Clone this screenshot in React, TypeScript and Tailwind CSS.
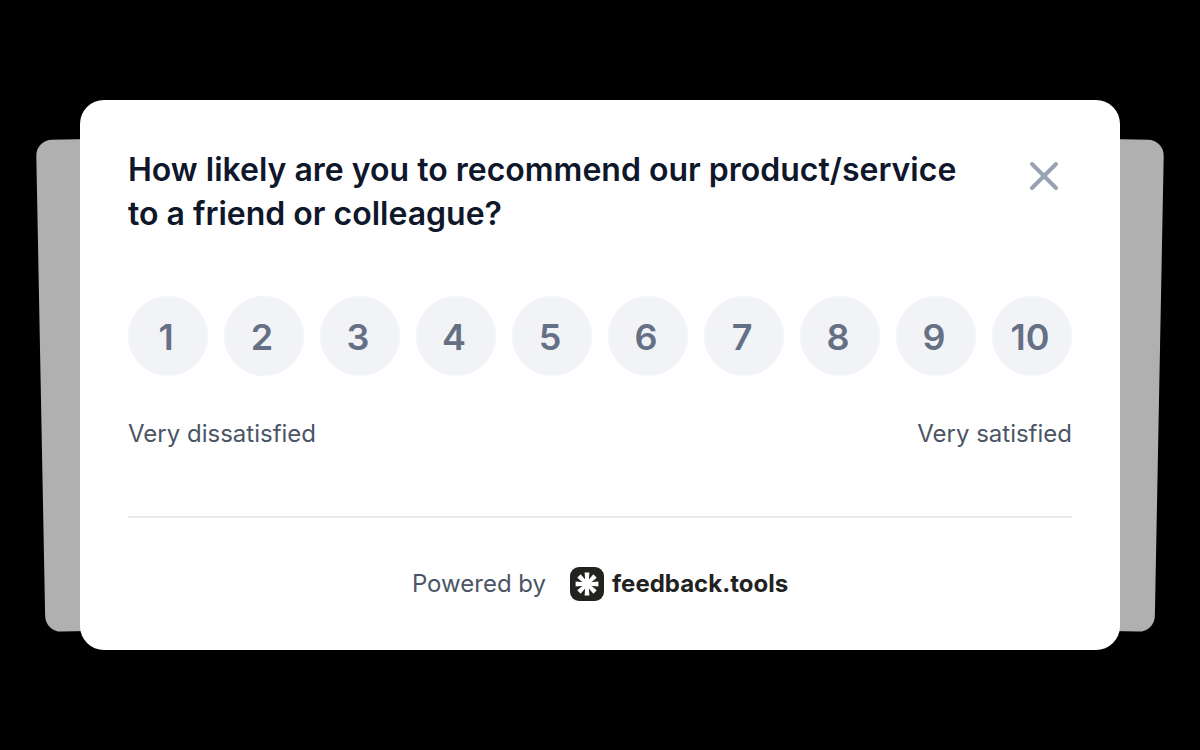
import { useState } from 'react'
import { X } from 'lucide-react'
import clsx from 'clsx'

const scores = [1, 2, 3, 4, 5, 6, 7, 8, 9, 10]
const rays = [0, 45, 90, 135, 180, 225, 270, 315]

function Logo() {
  return (
    <svg viewBox="0 0 34 34" className="size-[34px] shrink-0" aria-hidden="true">
      <rect width="34" height="34" rx="9" fill="#22231f" />
      {rays.map((angle) => (
        <path
          key={angle}
          d="M14.6 5.6h4.8L18.5 17h-3z"
          fill="#fff"
          transform={`rotate(${angle} 17 17)`}
        />
      ))}
      <circle cx="17" cy="17" r="5" fill="#fff" />
    </svg>
  )
}

export default function App() {
  const [selected, setSelected] = useState<number | null>(null)
  const [open, setOpen] = useState(true)

  return (
    <main className="min-h-screen flex items-center justify-center bg-black px-20 font-['Inter',sans-serif]">
      {open && (
        <div className="relative isolate w-full max-w-[1040px]">
          {/* tilted cards peeking out behind the survey */}
          <div className="absolute -z-10 -left-11 top-10 h-[492px] w-1/2 origin-top-left rotate-[-1.1deg] rounded-2xl bg-[#b0b0b0]" />
          <div className="absolute -z-10 -right-11 top-10 h-[492px] w-1/2 origin-top-right rotate-[1.1deg] rounded-2xl bg-[#b0b0b0]" />

          <section className="rounded-3xl bg-white p-12">
            <div className="flex items-start justify-between gap-8">
              <h1 className="flex-1 text-[32px] leading-11 font-semibold text-slate-900">
                How likely are you to recommend our product/service to a friend or colleague?
              </h1>
              <button
                type="button"
                aria-label="Close"
                onClick={() => setOpen(false)}
                className="cursor-pointer p-1 text-[#98a2b3]"
              >
                <X className="size-12" strokeWidth={2} />
              </button>
            </div>

            <div className="mt-15 flex justify-between">
              {scores.map((score) => (
                <button
                  key={score}
                  type="button"
                  aria-pressed={selected === score}
                  onClick={() => setSelected(score)}
                  className={clsx(
                    'size-20 cursor-pointer rounded-full pt-0.5 pr-1 text-4xl font-semibold',
                    selected === score ? 'bg-[#667085] text-white' : 'bg-[#f2f3f7] text-[#667085]',
                  )}
                >
                  {score}
                </button>
              ))}
            </div>

            <div className="mt-10 flex justify-between text-2xl leading-9 text-[#4b5565]">
              <span>Very dissatisfied</span>
              <span>Very satisfied</span>
            </div>

            <footer className="mt-16 flex items-center justify-center gap-6 border-t-2 border-[#e9e9ea] pt-12 text-2xl leading-9 text-[#4b5565]">
              <span>Powered by</span>
              <a href="#" className="flex items-center gap-2 font-bold text-[#22231f]">
                <Logo />
                feedback.tools
              </a>
            </footer>
          </section>
        </div>
      )}
    </main>
  )
}
